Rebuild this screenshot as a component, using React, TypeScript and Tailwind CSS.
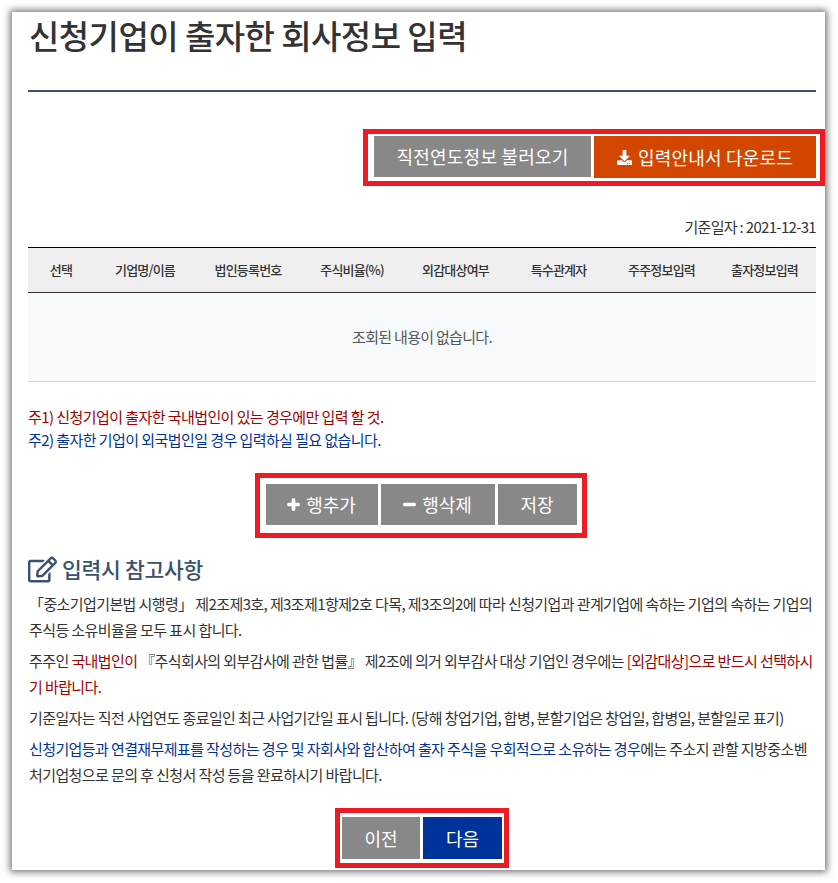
import { FaDownload, FaMinus, FaPlus, FaRegEdit } from "react-icons/fa";

const columns = ["선택", "기업명/이름", "법인등록번호", "주식비율(%)", "외감대상여부", "특수관계자", "주주정보입력", "출자정보입력"];

export default function App() {
  return (
    <div className="h-[883px] overflow-hidden bg-white pt-3 pl-3 font-['Noto_Sans_CJK_KR','Noto_Sans',sans-serif] text-[#333]">
      <div className="h-[858px] w-[813px] bg-white pr-[9px] pl-4 shadow-[0_0_7px_2px_rgba(0,0,0,0.55)]">
        <h1 className="h-[80px] border-b-2 border-[#3b5170] text-[33px] leading-[46px] font-medium tracking-[-0.55px] text-[#333]">
          <span className="ml-[1px]">신청기업이 출자한 회사정보 입력</span>
        </h1>

        <div className="mt-[37px] -mr-[9px] flex justify-end">
          <div className="flex h-[57px] w-[462px] items-start justify-end gap-[3px] border-[5px] border-[#ed1c24] pt-[2px] pr-[4px]">
            <button className="h-[41px] w-[217px] bg-[#888] text-[18px] tracking-[0.2px] text-white">직전연도정보 불러오기</button>
            <button className="flex h-[42px] w-[222px] items-center justify-center gap-[6px] bg-[#d34600] text-[18px] tracking-[0.2px] text-white">
              <FaDownload className="h-[15px] w-[15px]" />
              입력안내서 다운로드
            </button>
          </div>
        </div>

        <p className="mt-[31px] text-right text-[15px] leading-[20px] tracking-[-0.68px] text-[#333]">기준일자 : 2021-12-31</p>

        <div className="mt-[10px] border-t border-black">
          <div className="grid h-[45px] grid-cols-[66px_102px_104px_104px_103px_103px_103px_103px] items-center border-b border-[#333] bg-[#efefef] pr-[2px] text-center text-[13px] font-medium tracking-[-0.83px] text-[#333]">
            {columns.map((c) => (
              <div key={c}>{c}</div>
            ))}
          </div>
          <div className="flex h-[89px] items-center justify-center border-b border-[#cdd5dd] bg-[#f7fafb] text-[15px] tracking-[-0.7px] text-[#555]">
            조회된 내용이 없습니다.
          </div>
        </div>

        <div className="mt-[23px] text-[15px] leading-[23px] tracking-[-0.57px]">
          <p className="text-[#a00000]">주1) 신청기업이 출자한 국내법인이 있는 경우에만 입력 할 것.</p>
          <p className="text-[#003399]">주2) 출자한 기업이 외국법인일 경우 입력하실 필요 없습니다.</p>
        </div>

        <div className="mt-[22px] flex justify-center pr-[2px]">
          <div className="flex h-[65px] w-[332px] items-start justify-center gap-[3px] border-[5px] border-[#ed1c24] pt-[6px]">
            <button className="flex h-[41px] w-[112px] items-center justify-center gap-[6px] bg-[#888] text-[18px] text-white">
              <FaPlus className="h-[13px] w-[13px]" stroke="currentColor" strokeWidth={50} />
              행추가
            </button>
            <button className="flex h-[41px] w-[114px] items-center justify-center gap-[6px] bg-[#888] text-[18px] text-white">
              <FaMinus className="h-[13px] w-[13px]" stroke="currentColor" strokeWidth={50} />
              행삭제
            </button>
            <button className="h-[41px] w-[79px] bg-[#888] text-[18px] text-white">저장</button>
          </div>
        </div>

        <h2 className="mt-[14px] flex items-center gap-[5px] text-[21.5px] leading-[34px] font-medium tracking-[-0.3px] text-[#3b5170]">
          <FaRegEdit className="h-[29px] w-[29px]" />
          입력시 참고사항
        </h2>

        <div className="mt-[5px] flex flex-col gap-[5px] pl-[1px] text-[15px] leading-[26px] tracking-[-0.6px] text-[#333]">
          <p>
            「중소기업기본법 시행령」 제2조제3호, 제3조제1항제2호 다목, 제3조의2에 따라 신청기업과 관계기업에 속하는 기업의 속하는 기업의 주식등 소유비율을 모두 표시 합니다.
          </p>
          <p>
            주주인 <span className="text-[#a00000]">국내법인이</span> 『주식회사의 외부감사에 관한 법률』 제2조에 의거 외부감사 대상 기업인 경우에는{" "}
            <span className="text-[#a00000]">[외감대상]으로 반드시 선택하시기 바랍니다.</span>
          </p>
          <p>기준일자는 직전 사업연도 종료일인 최근 사업기간일 표시 됩니다. (당해 창업기업, 합병, 분할기업은 창업일, 합병일, 분할일로 표기)</p>
          <p>
            <span className="text-[#003399]">신청기업등과 연결재무제표를 작성하는 경우 및 자회사와 합산하여 출자 주식을 우회적으로 소유하는 경우</span>
            에는 주소지 관할 지방중소벤처기업청으로 문의 후 신청서 작성 등을 완료하시기 바랍니다.
          </p>
        </div>

        <div className="mt-[20px] flex justify-center">
          <div className="flex h-[60px] w-[174px] items-start justify-center gap-[3px] border-[5px] border-[#ed1c24] pt-[4px]">
            <button className="h-[42px] w-[78px] bg-[#888] text-[18px] text-white">이전</button>
            <button className="h-[42px] w-[79px] bg-[#003399] text-[18px] text-white">다음</button>
          </div>
        </div>
      </div>
    </div>
  );
}
